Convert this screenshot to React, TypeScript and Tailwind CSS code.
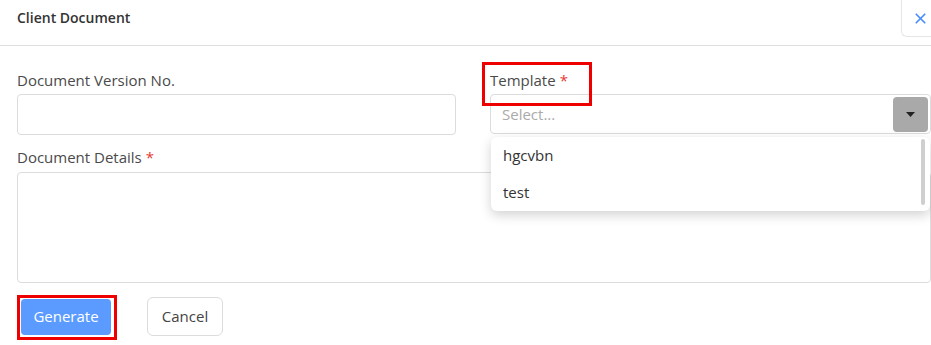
import { X } from "lucide-react";

const font = { fontFamily: "'Open Sans', Lato, sans-serif" };

function Label({ text, required }: { text: string; required?: boolean }) {
  return (
    <label className="block text-[15px] leading-5 text-[#4a4a4a]">
      {text}
      {required && <span className="ml-1 text-[#e53935]">*</span>}
    </label>
  );
}

export default function App() {
  const options = ["hgcvbn", "test"];

  return (
    <div style={font} className="h-[345px] w-[931px] overflow-hidden bg-white">
      <header className="flex h-[46px] items-start justify-between border-b border-[#dedede]">
        <h1 className="pl-[17px] pt-[7px] text-[14px] font-semibold text-[#333]">Client Document</h1>
        <button className="mr-[-8px] flex h-[37px] w-[38px] items-center justify-center rounded-bl-md border-b border-l border-[#e6e6e6] text-[#4c8dfc]">
          <X size={17} strokeWidth={2.4} />
        </button>
      </header>

      <div className="grid grid-cols-[439px_441px] gap-x-[34px] px-[17px] pt-[24px]">
        <div>
          <Label text="Document Version No." />
          <input className="mt-[4px] h-[41px] w-full rounded border border-[#dcdcdc] outline-none" />
        </div>
        <div className="relative">
          <Label text="Template" required />
          <span className="pointer-events-none absolute left-[-8px] top-[-8px] h-[44px] w-[110px] border-[3px] border-[#ee0000]" />
          <div className="mt-[4px] flex h-[40px] items-center justify-between rounded border border-[#dcdcdc] pl-[11px] pr-[2px]">
            <span className="text-[15px] text-[#aaa]">Select...</span>
            <span className="flex h-[35px] w-[35px] items-center justify-center rounded-sm bg-[#a9a9a9]">
              <svg width="9" height="5" viewBox="0 0 9 5">
                <path d="M0 0h9L4.5 5z" fill="#222" />
              </svg>
            </span>
          </div>
          <ul className="absolute left-[1px] right-[1px] top-[67px] z-10 rounded-md bg-white shadow-[0_4px_12px_rgba(0,0,0,0.18)]">
            {options.map((o) => (
              <li key={o} className="flex h-[37px] items-center px-[12px] text-[15px] text-[#333]">
                {o}
              </li>
            ))}
            <span className="absolute right-[5px] top-[2px] h-[66px] w-[4px] rounded bg-[#cfcfcf]" />
          </ul>
        </div>

        <div className="col-span-2 mt-[12px]">
          <Label text="Document Details" required />
          <textarea className="mt-[5px] block h-[111px] w-[914px] resize-none rounded border border-[#dcdcdc] outline-none" />
        </div>
      </div>

      <div className="flex items-center gap-[36px] px-[21px] pt-[14px]">
        <div className="relative">
          <button className="h-[36px] w-[90px] rounded-sm bg-[#5b9bff] text-[15px] text-white">Generate</button>
          <span className="pointer-events-none absolute left-[-4px] top-[-4px] h-[45px] w-[100px] border-[3px] border-[#ee0000]" />
        </div>
        <button className="h-[39px] w-[76px] rounded-md border border-[#dcdcdc] text-[15px] text-[#444]">Cancel</button>
      </div>
    </div>
  );
}
